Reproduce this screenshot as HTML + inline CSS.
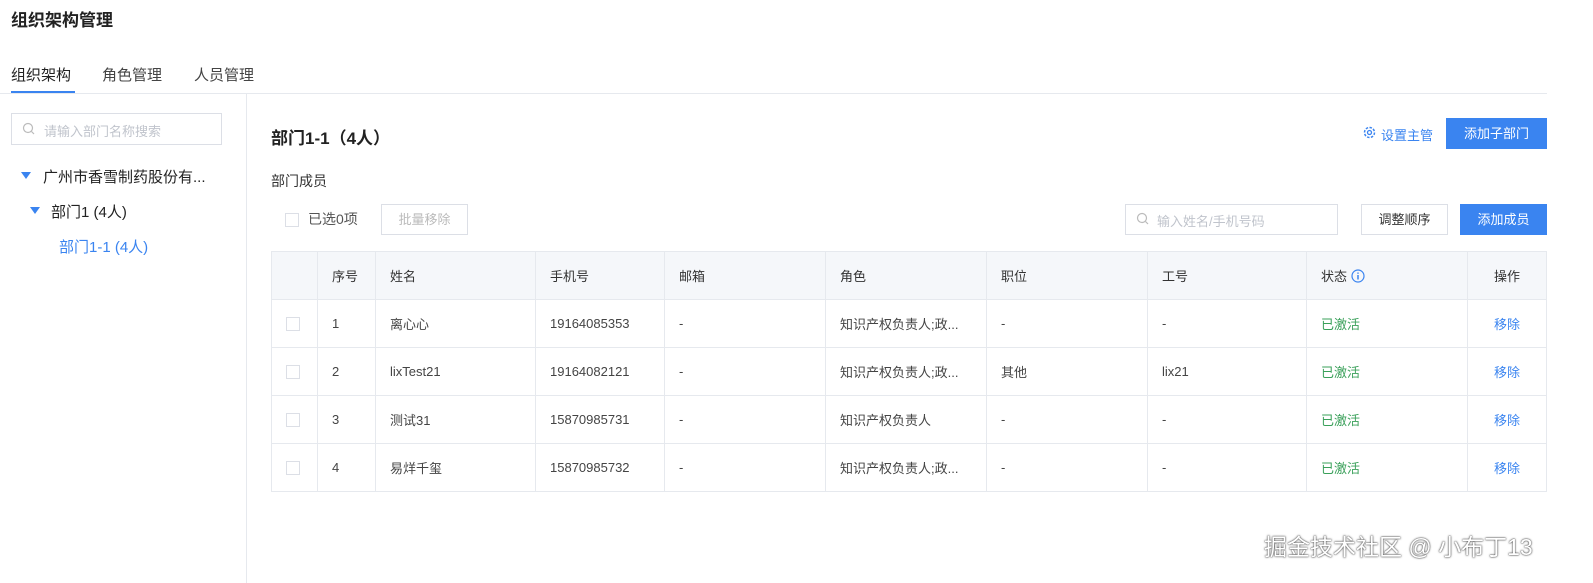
<!DOCTYPE html>
<html><head><meta charset="utf-8"><style>
*{margin:0;padding:0;box-sizing:border-box}
body{width:1593px;height:583px;background:#fff;font-family:"Liberation Sans","Noto Sans CJK SC",sans-serif;color:#333;position:relative;overflow:hidden;font-size:14px}
.a{position:absolute;white-space:nowrap}
.btn{position:absolute;border:1px solid #dcdfe6;font-size:13px;text-align:center;color:#333;background:#fff}
.pri{background:#3a84f0;color:#fff;border-color:#3a84f0}
table{position:absolute;left:271px;top:251px;border-collapse:collapse;font-size:13px;width:1276px}
td{border:1px solid #e6e9ee;height:48px;padding-left:14px;color:#444}
tr.h td{background:#f5f7fa;color:#333}
.cb{display:inline-block;width:14px;height:14px;border:1px solid #dcdfe6;background:#fff;vertical-align:middle}
.g{color:#3aa05a}.l{color:#3a84f0}
</style></head><body>
<div class="a" style="left:11px;top:6px;font-size:17px;font-weight:bold;color:#222">组织架构管理</div>
<div class="a" style="left:11px;top:64px;font-size:15px;color:#222">组织架构</div>
<div class="a" style="left:102px;top:64px;font-size:15px;color:#444">角色管理</div>
<div class="a" style="left:194px;top:64px;font-size:15px;color:#444">人员管理</div>
<div class="a" style="left:11px;top:91px;width:64px;height:2px;background:#3a84f0"></div>
<div class="a" style="left:0;top:93px;width:1547px;height:1px;background:#e6e9ee"></div>
<div class="a" style="left:246px;top:94px;width:1px;height:489px;background:#e6e9ee"></div>
<div class="a" style="left:11px;top:113px;width:211px;height:32px;border:1px solid #dcdfe6"></div>
<svg class="a" style="left:22px;top:122px" width="14" height="14"><circle cx="6" cy="6" r="4.5" fill="none" stroke="#bbb" stroke-width="1.2"/><path d="M9.5 9.5L12 12" stroke="#bbb" stroke-width="1.2"/></svg>
<div class="a" style="left:44px;top:121px;font-size:13px;color:#c0c4cc">请输入部门名称搜索</div>
<svg class="a" style="left:21px;top:172px" width="10" height="8"><path d="M0 0H10L5 7Z" fill="#3a84f0"/></svg>
<div class="a" style="left:43px;top:166px;font-size:15px;color:#222">广州市香雪制药股份有...</div>
<svg class="a" style="left:30px;top:207px" width="10" height="8"><path d="M0 0H10L5 7Z" fill="#3a84f0"/></svg>
<div class="a" style="left:51px;top:201px;font-size:15px;color:#222">部门1 (4人)</div>
<div class="a" style="left:59px;top:236px;font-size:15px;color:#3a84f0">部门1-1 (4人)</div>
<div class="a" style="left:271px;top:124px;font-size:17px;font-weight:bold;color:#222">部门1-1（4人）</div>
<svg class="a" style="left:1363px;top:126px" width="13" height="13"><circle cx="6.5" cy="6.5" r="5" fill="none" stroke="#3a84f0" stroke-width="1.5" stroke-dasharray="2.5 1.4"/><circle cx="6.5" cy="6.5" r="2" fill="none" stroke="#3a84f0" stroke-width="1.3"/></svg>
<div class="a" style="left:1381px;top:125px;font-size:13px;color:#3a84f0">设置主管</div>
<div class="btn pri" style="left:1446px;top:118px;width:101px;height:31px;line-height:29px">添加子部门</div>
<div class="a" style="left:271px;top:171px;font-size:14px;color:#333">部门成员</div>
<div class="a" style="left:285px;top:211px"><span class="cb"></span></div>
<div class="a" style="left:308px;top:209px;font-size:14px;color:#555">已选0项</div>
<div class="btn" style="left:381px;top:204px;width:87px;height:31px;line-height:29px;color:#bbb">批量移除</div>
<div class="a" style="left:1125px;top:204px;width:213px;height:31px;border:1px solid #dcdfe6"></div>
<svg class="a" style="left:1136px;top:212px" width="14" height="14"><circle cx="6" cy="6" r="4.5" fill="none" stroke="#bbb" stroke-width="1.2"/><path d="M9.5 9.5L12 12" stroke="#bbb" stroke-width="1.2"/></svg>
<div class="a" style="left:1157px;top:211px;font-size:13px;color:#c0c4cc">输入姓名/手机号码</div>
<div class="btn" style="left:1361px;top:204px;width:87px;height:31px;line-height:29px">调整顺序</div>
<div class="btn pri" style="left:1460px;top:204px;width:87px;height:31px;line-height:29px">添加成员</div>
<table>
<tr class="h"><td style="width:46px"></td><td style="width:58px">序号</td><td style="width:160px">姓名</td><td style="width:129px">手机号</td><td style="width:161px">邮箱</td><td style="width:161px">角色</td><td style="width:161px">职位</td><td style="width:159px">工号</td><td style="width:161px">状态 <svg width="14" height="14" style="vertical-align:-2px"><circle cx="7" cy="7" r="6" fill="none" stroke="#3a84f0" stroke-width="1.2"/><path d="M7 6V10.5M7 3.5V4.8" stroke="#3a84f0" stroke-width="1.5"/></svg></td><td style="text-align:center;padding:0">操作</td></tr>
<tr><td><span class="cb"></span></td><td>1</td><td>离心心</td><td>19164085353</td><td>-</td><td>知识产权负责人;政...</td><td>-</td><td>-</td><td class="g">已激活</td><td class="l" style="text-align:center;padding:0">移除</td></tr>
<tr><td><span class="cb"></span></td><td>2</td><td>lixTest21</td><td>19164082121</td><td>-</td><td>知识产权负责人;政...</td><td>其他</td><td>lix21</td><td class="g">已激活</td><td class="l" style="text-align:center;padding:0">移除</td></tr>
<tr><td><span class="cb"></span></td><td>3</td><td>测试31</td><td>15870985731</td><td>-</td><td>知识产权负责人</td><td>-</td><td>-</td><td class="g">已激活</td><td class="l" style="text-align:center;padding:0">移除</td></tr>
<tr><td><span class="cb"></span></td><td>4</td><td>易烊千玺</td><td>15870985732</td><td>-</td><td>知识产权负责人;政...</td><td>-</td><td>-</td><td class="g">已激活</td><td class="l" style="text-align:center;padding:0">移除</td></tr>
</table>
<div class="a" style="left:1264px;top:528px;font-size:23px;color:#fff;text-shadow:0 0 2px #444,0 0 1px #333">掘金技术社区 @ 小布丁13</div>
</body></html>
